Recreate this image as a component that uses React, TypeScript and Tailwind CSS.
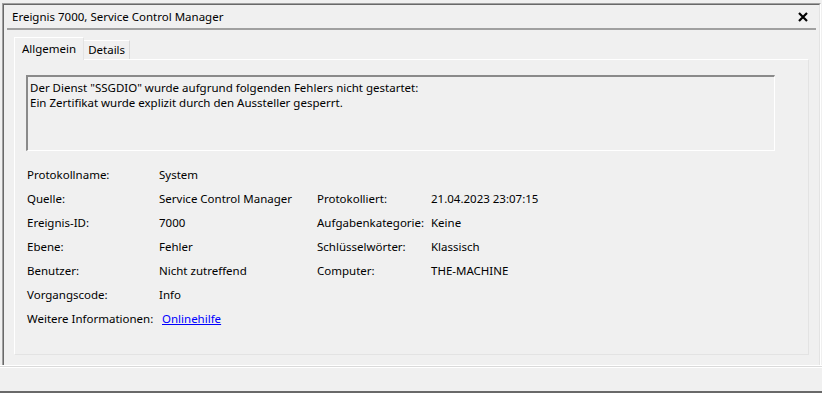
import React from 'react'

const rows: [string, string, string?, string?][] = [
  ['Protokollname:', 'System'],
  ['Quelle:', 'Service Control Manager', 'Protokolliert:', '21.04.2023 23:07:15'],
  ['Ereignis-ID:', '7000', 'Aufgabenkategorie:', 'Keine'],
  ['Ebene:', 'Fehler', 'Schlüsselwörter:', 'Klassisch'],
  ['Benutzer:', 'Nicht zutreffend', 'Computer:', 'THE-MACHINE'],
  ['Vorgangscode:', 'Info'],
]

export default function App() {
  return (
    <div
      className="w-[822px] h-[393px] bg-[#f0f0f0] flex flex-col text-[11.5px] text-black overflow-hidden"
      style={{ fontFamily: '"Noto Sans", "Open Sans", sans-serif' }}
    >
      {/* Fenster */}
      <div className="mt-[3px] ml-[2px] mr-[1px] h-[362px] border-t border-l border-[#a0a0a0] border-r border-r-white">
        <div className="h-full border-t border-l border-[#696969] border-r border-r-[#e3e3e3] flex flex-col">
          {/* Titel */}
          <div className="h-[23px] flex items-center justify-between pl-[8px] pr-[10px]">
            <span>Ereignis 7000, Service Control Manager</span>
            <svg width="10" height="10" viewBox="0 0 10 10" className="mr-[1px]">
              <path d="M1 1 L9 9 M9 1 L1 9" stroke="#000" strokeWidth="2.2" />
            </svg>
          </div>
          <div className="ml-[3px] mr-[3px] h-[2px] bg-[#a0a0a0]" />

          {/* Tabs */}
          <div className="flex items-end ml-[10px] mt-[6px] h-[23px]">
            <div className="h-[23px] px-[7px] flex items-center bg-[#f0f0f0] border-t border-l border-r border-[#e3e3e3] border-t-white border-l-white -mb-px relative z-10">
              Allgemein
            </div>
            <div className="h-[19px] px-[4px] flex items-center border-t border-r border-[#d9d9d9] border-t-white">
              Details
            </div>
          </div>

          {/* Panel */}
          <div className="ml-[10px] mr-[10px] h-[296px] border border-white border-r-[#e3e3e3] border-b-[#e3e3e3] px-[11px] pt-[15px]">
            <div className="h-[76px] mr-[22px] border-t-2 border-l-2 border-t-[#8a8a8a] border-l-[#8a8a8a] border-r border-b border-r-white border-b-white bg-[#f0f0f0] px-[2px] pt-[3px] leading-[15px]">
              <div>Der Dienst "SSGDIO" wurde aufgrund folgenden Fehlers nicht gestartet:</div>
              <div>Ein Zertifikat wurde explizit durch den Aussteller gesperrt.</div>
            </div>

            <div className="mt-[12px] pl-px flex flex-col">
              {rows.map((r) => (
                <div key={r[0]} className="h-[24px] flex items-center whitespace-nowrap">
                  <div className="w-[132px]">{r[0]}</div>
                  <div className="w-[158px]">{r[1]}</div>
                  {r[2] && <div className="w-[114px]">{r[2]}</div>}
                  {r[3] && <div>{r[3]}</div>}
                </div>
              ))}
              <div className="h-[24px] flex items-center whitespace-nowrap">
                <div className="w-[135px]">Weitere Informationen:</div>
                <span className="text-[#0000ff] underline">Onlinehilfe</span>
              </div>
            </div>
          </div>
        </div>
      </div>

      {/* untere Leiste */}
      <div className="h-px bg-white" />
      <div className="h-px bg-[#dadada]" />
      <div className="h-px bg-white" />
      <div className="flex-1" />
      <div className="h-[2px] bg-[#696969]" />
    </div>
  )
}
